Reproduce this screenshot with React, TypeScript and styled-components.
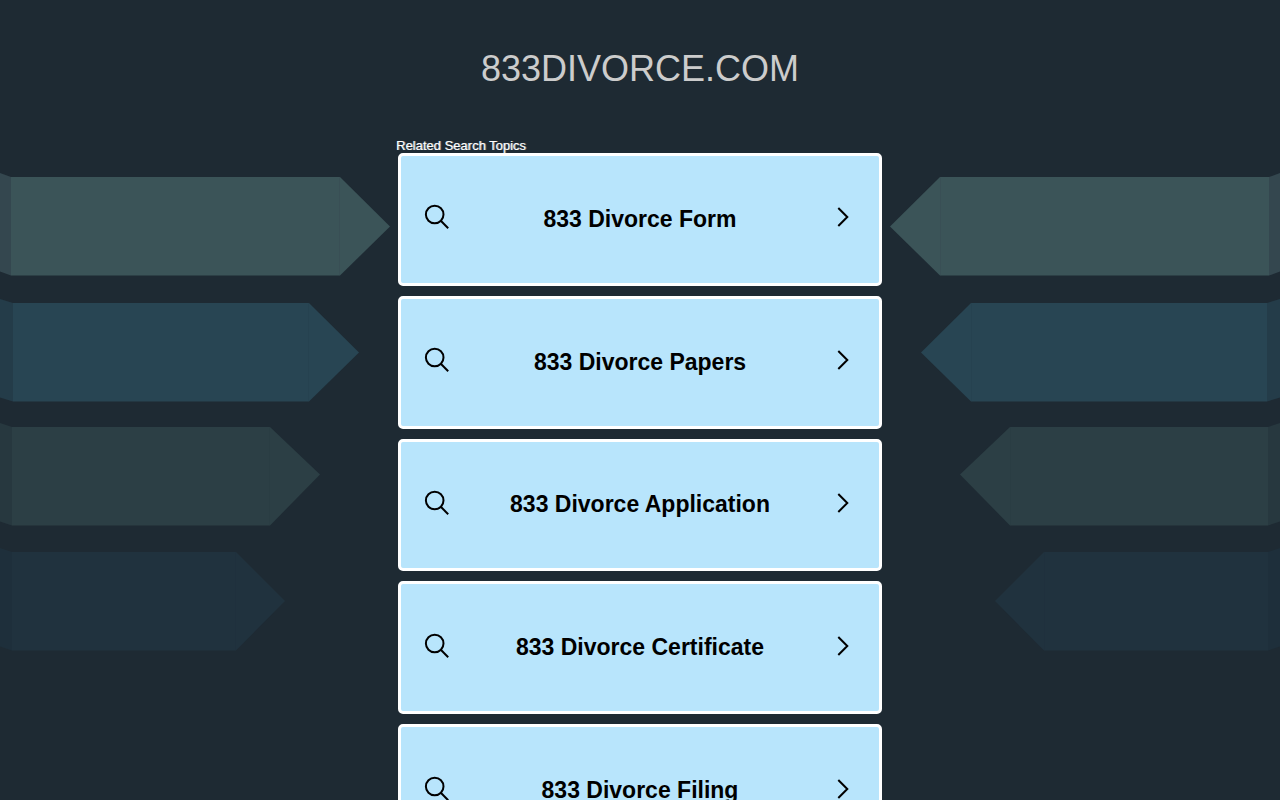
import React from "react";
import styled, { createGlobalStyle } from "styled-components";

const GlobalStyle = createGlobalStyle`
  * {
    box-sizing: border-box;
  }

  html {
    height: 100%;
    overflow: hidden;
  }

  body {
    margin: 0;
    background: #1e2a33;
    font-family: Arial, "Liberation Sans", sans-serif;
  }
`;

const Page = styled.div`
  position: relative;
  min-height: 100vh;
`;

const Decoration = styled.svg<{ $side: "left" | "right" }>`
  position: absolute;
  top: 160px;
  ${({ $side }) => $side}: 0;
  ${({ $side }) => ($side === "right" ? "transform: scaleX(-1);" : "")}
  width: 400px;
  height: 500px;
  pointer-events: none;
`;

const Header = styled.header`
  padding: 48px 16px 49px;
  text-align: center;
`;

const Title = styled.h1`
  margin: 0;
  color: #cccccc;
  font-size: 36px;
  font-weight: 400;
  line-height: 41px;
`;

const Content = styled.main`
  position: relative;
  max-width: 488px;
  margin: 0 auto;
`;

const Label = styled.h2`
  margin: 0;
  color: #ffffff;
  font-size: 13px;
  font-weight: 400;
  line-height: 15px;
  text-shadow: 1px 0 0 rgba(255, 255, 255, 0.5);
`;

const Topics = styled.ul`
  display: grid;
  grid-auto-rows: 1fr;
  gap: 10px;
  min-height: 704px;
  margin: 0;
  padding: 0 2px;
  list-style: none;
`;

const Topic = styled.li`
  display: flex;
`;

const TopicLink = styled.a`
  display: flex;
  flex: 1;
  align-items: center;
  padding: 0 24px;
  border: 3px solid #ffffff;
  border-radius: 5px;
  background: #b8e5fc;
  color: #000000;
  text-decoration: none;
`;

const TopicName = styled.span`
  flex: 1;
  font-size: 23px;
  font-weight: 700;
  line-height: 27px;
  text-align: center;
`;

const Icon = styled.svg`
  flex: none;
  width: 24px;
  height: 28px;
  overflow: visible;
  fill: none;
  stroke: #000000;
  stroke-width: 2;
`;

const topics = [
  "833 Divorce Form",
  "833 Divorce Papers",
  "833 Divorce Application",
  "833 Divorce Certificate",
  "833 Divorce Filing",
];

const ribbons = [
  { top: 17, fold: 11, shoulder: 340, tip: 390, tipY: 66.5, face: "#3b5458", edge: "#34474f" },
  { top: 143, fold: 13, shoulder: 309, tip: 359, tipY: 192.5, face: "#284553", edge: "#243c49" },
  { top: 267, fold: 12, shoulder: 270, tip: 320, tipY: 314.5, face: "#2c3f45", edge: "#27383f" },
  { top: 392, fold: 12, shoulder: 236, tip: 285, tipY: 441, face: "#20323e", edge: "#1e2f3b" },
];

function Ribbons({ side }: { side: "left" | "right" }) {
  return (
    <Decoration $side={side} viewBox="0 0 400 500" aria-hidden="true">
      {ribbons.map(({ top, fold, shoulder, tip, tipY, face, edge }) => (
        <g key={top}>
          <path
            d={`M0 ${top - 4}L${fold} ${top}V${top + 98.5}L0 ${top + 94.5}Z`}
            fill={edge}
          />
          <path
            d={`M${fold} ${top}H${shoulder}L${tip} ${tipY}L${shoulder} ${top + 98.5}H${fold}Z`}
            fill={face}
          />
          <path
            d={`M${shoulder - 0.5} ${top}v98`}
            stroke={edge}
            strokeOpacity="0.3"
          />
        </g>
      ))}
    </Decoration>
  );
}

function SearchIcon() {
  return (
    <Icon viewBox="0 0 24 28" aria-hidden="true">
      <circle cx="9.7" cy="9.5" r="8.8" />
      <path d="M15.8 15.8L23.2 23.2" />
    </Icon>
  );
}

function ChevronIcon() {
  return (
    <Icon viewBox="0 0 24 28" aria-hidden="true">
      <path d="M7.3 3L16.3 12L7.3 21" />
    </Icon>
  );
}

export default function App() {
  return (
    <>
      <GlobalStyle />
      <Page>
        <Ribbons side="left" />
        <Ribbons side="right" />
        <Header>
          <Title>833DIVORCE.COM</Title>
        </Header>
        <Content>
          <Label>Related Search Topics</Label>
          <Topics>
            {topics.map((topic) => (
              <Topic key={topic}>
                <TopicLink href="#">
                  <SearchIcon />
                  <TopicName>{topic}</TopicName>
                  <ChevronIcon />
                </TopicLink>
              </Topic>
            ))}
          </Topics>
        </Content>
      </Page>
    </>
  );
}
